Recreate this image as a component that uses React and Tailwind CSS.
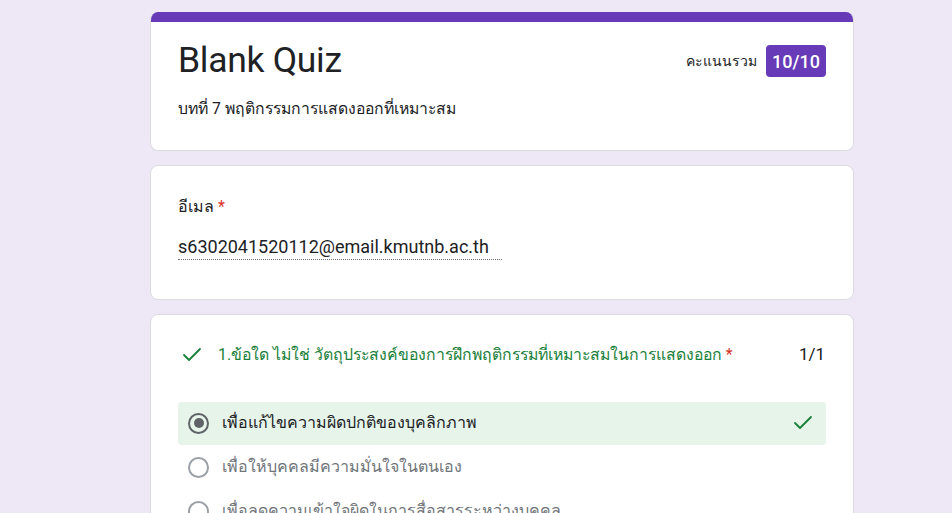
import { Check } from "lucide-react";

const options = [
  { text: "เพื่อแก้ไขความผิดปกติของบุคลิกภาพ", picked: true },
  { text: "เพื่อให้บุคคลมีความมั่นใจในตนเอง" },
  { text: "เพื่อลดความเข้าใจผิดในการสื่อสารระหว่างบุคคล" },
  { text: "เพื่อเสริมสร้างสัมพันธภาพที่ดีระหว่างบุคคล" },
];

const Radio = ({ on }) => (
  <span
    className={`flex items-center justify-center w-[21px] h-[21px] rounded-full border-2 shrink-0 ${
      on ? "border-[#5f6368]" : "border-[#9aa0a6]"
    }`}
  >
    {on && <span className="w-[10px] h-[10px] rounded-full bg-[#5f6368]" />}
  </span>
);

export default function App() {
  return (
    <div
      className="w-[952px] h-[513px] overflow-hidden bg-[#ede7f6] text-[#202124]"
      style={{ fontFamily: "Roboto, 'Noto Sans', sans-serif" }}
    >
      <div className="ml-[150px] w-[704px] pt-[12px] flex flex-col">
        {/* header card */}
        <div className="bg-white rounded-lg border border-[#dadce0] border-t-0 overflow-hidden">
          <div className="h-[10px] bg-[#673ab7]" />
          <div className="px-[27px] pt-[16px] pb-[29px]">
            <div className="flex items-start justify-between">
              <h1 className="text-[35.5px] leading-[44px] tracking-[-0.3px]">Blank Quiz</h1>
              <div className="flex items-center gap-[9px] mt-[7px]">
                <span className="text-[14px]">คะแนนรวม</span>
                <span className="bg-[#673ab7] text-white text-[18px] font-medium rounded px-[6px] h-[32px] flex items-center">
                  10/10
                </span>
              </div>
            </div>
            <p className="text-[15.75px] mt-[15px] leading-[24px]">บทที่ 7 พฤติกรรมการแสดงออกที่เหมาะสม</p>
          </div>
        </div>

        {/* email card */}
        <div className="mt-[14px] bg-white rounded-lg border border-[#dadce0] px-[27px] pt-[29px] pb-[39px]">
          <div className="text-[16px] leading-[24px]">
            อีเมล <span className="text-[#d93025]">*</span>
          </div>
          <div className="mt-[16px] w-[324px] text-[18px] leading-[24px] border-b border-dotted border-[#70757a]">
            s6302041520112@email.kmutnb.ac.th
          </div>
        </div>

        {/* question card */}
        <div className="mt-[14px] bg-white rounded-lg border border-[#dadce0] px-[27px] pt-[27px] pb-[20px]">
          <div className="flex items-center justify-between">
            <div className="flex items-center gap-[14px] pl-[2px]">
              <Check size={24} strokeWidth={1.8} className="text-[#188038]" />
              <span className="text-[15.8px] text-[#188038] leading-[24px]">
                1.ข้อใด ไม่ใช่ วัตถุประสงค์ของการฝึกพฤติกรรมที่เหมาะสมในการแสดงออก{" "}
                <span className="text-[#d93025]">*</span>
              </span>
            </div>
            <span className="text-[17px] mr-[1px]">1/1</span>
          </div>
          <div className="mt-[34px] flex flex-col gap-[1px]">
            {options.map((o, i) => (
              <div
                key={i}
                className={`flex items-center h-[43px] rounded px-[10px] ${o.picked ? "bg-[#e6f4ea]" : ""}`}
              >
                <Radio on={o.picked} />
                <span className={`ml-[13px] text-[16px] flex-1 ${o.picked ? "text-[#202124]" : "text-[#70757a]"}`}>
                  {o.text}
                </span>
                {o.picked && <Check size={24} strokeWidth={1.8} className="text-[#188038] mr-[1px]" />}
              </div>
            ))}
          </div>
        </div>
      </div>
    </div>
  );
}
